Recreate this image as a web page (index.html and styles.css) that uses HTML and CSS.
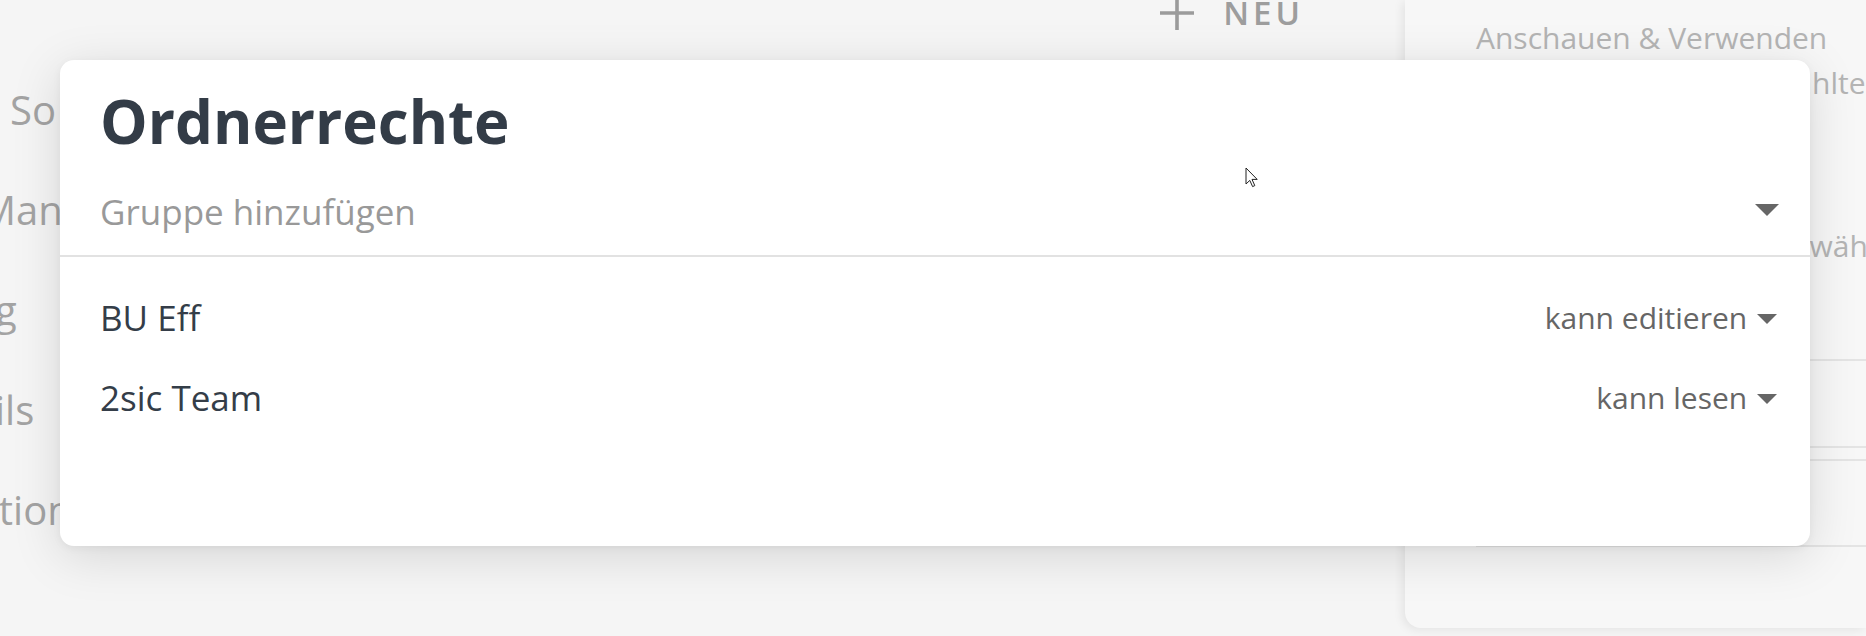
FILE: index.html
```html
<!DOCTYPE html>
<html lang="de">
<head>
<meta charset="utf-8">
<title>Ordnerrechte</title>
<link rel="stylesheet" href="styles.css">
</head>
<body>
<div class="page">
  <nav class="sidebar">
    <div class="nav-item nav-a">So geht's</div>
    <div class="nav-item nav-b">Management</div>
    <div class="nav-item nav-c">Einstellung</div>
    <div class="nav-item nav-d">Details</div>
    <div class="nav-item nav-e">Information</div>
  </nav>
  <main class="main">
    <div class="toolbar">
      <button class="btn-new">
        <svg class="plus" viewBox="0 0 36 36" width="36" height="36"><path d="M18 1v34M1 18h34" stroke="#9b9b9b" stroke-width="3.6" fill="none"/></svg>
        <span>NEU</span>
      </button>
    </div>
  </main>
  <aside class="panel">
    <div class="panel-label">Anschauen &amp; Verwenden</div>
    <div class="panel-opt opt-1">Nur für ausgewählte Gruppen</div>
    <div class="panel-opt opt-2">Bitte eine Gruppe auswählen</div>
    <div class="field field-1"></div>
    <div class="field field-2"></div>
    <div class="field field-3"></div>
  </aside>
</div>

<section class="modal">
  <h1 class="modal-title">Ordnerrechte</h1>
  <div class="group-select">
    <span class="placeholder">Gruppe hinzufügen</span>
    <span class="caret caret-lg"></span>
  </div>
  <ul class="perm-list">
    <li class="perm-row">
      <span class="perm-name">BU Eff</span>
      <span class="perm-level">kann editieren <span class="caret caret-sm"></span></span>
    </li>
    <li class="perm-row">
      <span class="perm-name">2sic Team</span>
      <span class="perm-level">kann lesen <span class="caret caret-sm"></span></span>
    </li>
  </ul>
</section>

<svg class="cursor" width="14" height="21" viewBox="0 0 14 21"><path d="M1 1 L1 17 L4.8 13.4 L7.6 19.6 L9.8 18.6 L7 12.4 L12.2 12.4 Z" fill="#fff" stroke="#222" stroke-width="1" stroke-linejoin="miter"/></svg>
</body>
</html>
```
FILE: styles.css
```css
* { box-sizing: border-box; }
html, body {
  margin: 0;
  padding: 0;
}
body {
  width: 1866px;
  height: 636px;
  overflow: hidden;
  position: relative;
  background: #f5f5f5;
  font-family: "Open Sans", "Liberation Sans", sans-serif;
}

.page {
  display: flex;
  height: 636px;
}

.sidebar {
  width: 300px;
  flex-shrink: 0;
  padding-top: 60px;
  overflow: hidden;
}
.nav-item {
  font-size: 40px;
  line-height: 100px;
  height: 100px;
  color: #a3a3a3;
  white-space: nowrap;
}
.nav-a { margin-left: 10px; }
.nav-b { margin-left: -20px; }
.nav-c { margin-left: -187px; }
.nav-d { margin-left: -93px; }
.nav-e { margin-left: -150px; }

.main {
  flex: 1;
}
.toolbar {
  display: flex;
  justify-content: flex-end;
  padding-right: 101px;
  margin-top: -7px;
}
.btn-new {
  display: flex;
  align-items: center;
  gap: 28px;
  border: 0;
  background: transparent;
  padding: 0;
  font-family: inherit;
  font-size: 33px;
  line-height: 40px;
  font-weight: 600;
  letter-spacing: 4px;
  color: #9d9d9d;
}

.panel {
  width: 461px;
  height: 628px;
  flex-shrink: 0;
  background: #f7f7f7;
  border-bottom-left-radius: 16px;
  box-shadow: -3px 2px 10px rgba(0,0,0,0.07);
  padding: 18px 0 0 71px;
  white-space: nowrap;
  overflow: hidden;
}
.panel-label, .panel-opt {
  font-size: 30px;
  line-height: 40px;
  color: #b4b4b4;
}
.opt-1 { margin-top: 5px; margin-left: 104px; }
.opt-2 { margin-top: 123px; margin-left: 30px; }
.field { border-bottom: 2px solid #e4e4e4; }
.field-1 { height: 95px; }
.field-2 { height: 87px; }
.field-3 { height: 88px; margin-top: 11px; border-top: 2px solid #e4e4e4; }

.modal {
  position: absolute;
  left: 60px;
  top: 60px;
  width: 1750px;
  height: 486px;
  background: #fff;
  border-radius: 14px;
  box-shadow: 0 10px 50px rgba(0,0,0,0.13), 0 2px 8px rgba(0,0,0,0.05);
}
.modal-title {
  margin: 29px 40px 0;
  font-size: 60px;
  line-height: 64px;
  font-weight: 700;
  color: #333c47;
}
.group-select {
  display: flex;
  align-items: center;
  justify-content: space-between;
  margin-top: 39px;
  padding: 0 31px 23px 40px;
  border-bottom: 2px solid #e2e2e2;
}
.placeholder {
  font-size: 35px;
  line-height: 40px;
  color: #999;
}
.caret {
  display: inline-block;
  width: 0;
  height: 0;
  border-style: solid;
  border-color: #666 transparent transparent transparent;
}
.caret-lg { border-width: 12px 12px 0 12px; margin-top: -4px; }
.caret-sm { border-width: 10px 10px 0 10px; margin-left: 2px; vertical-align: 5px; }

.perm-list {
  list-style: none;
  margin: 0;
  padding: 20px 33px 0 40px;
}
.perm-row {
  display: flex;
  align-items: center;
  justify-content: space-between;
  height: 80px;
}
.perm-name {
  font-size: 35px;
  color: #343d48;
}
.perm-level {
  font-size: 30px;
  color: #666;
}

.cursor {
  position: absolute;
  left: 1245px;
  top: 167px;
}
```
